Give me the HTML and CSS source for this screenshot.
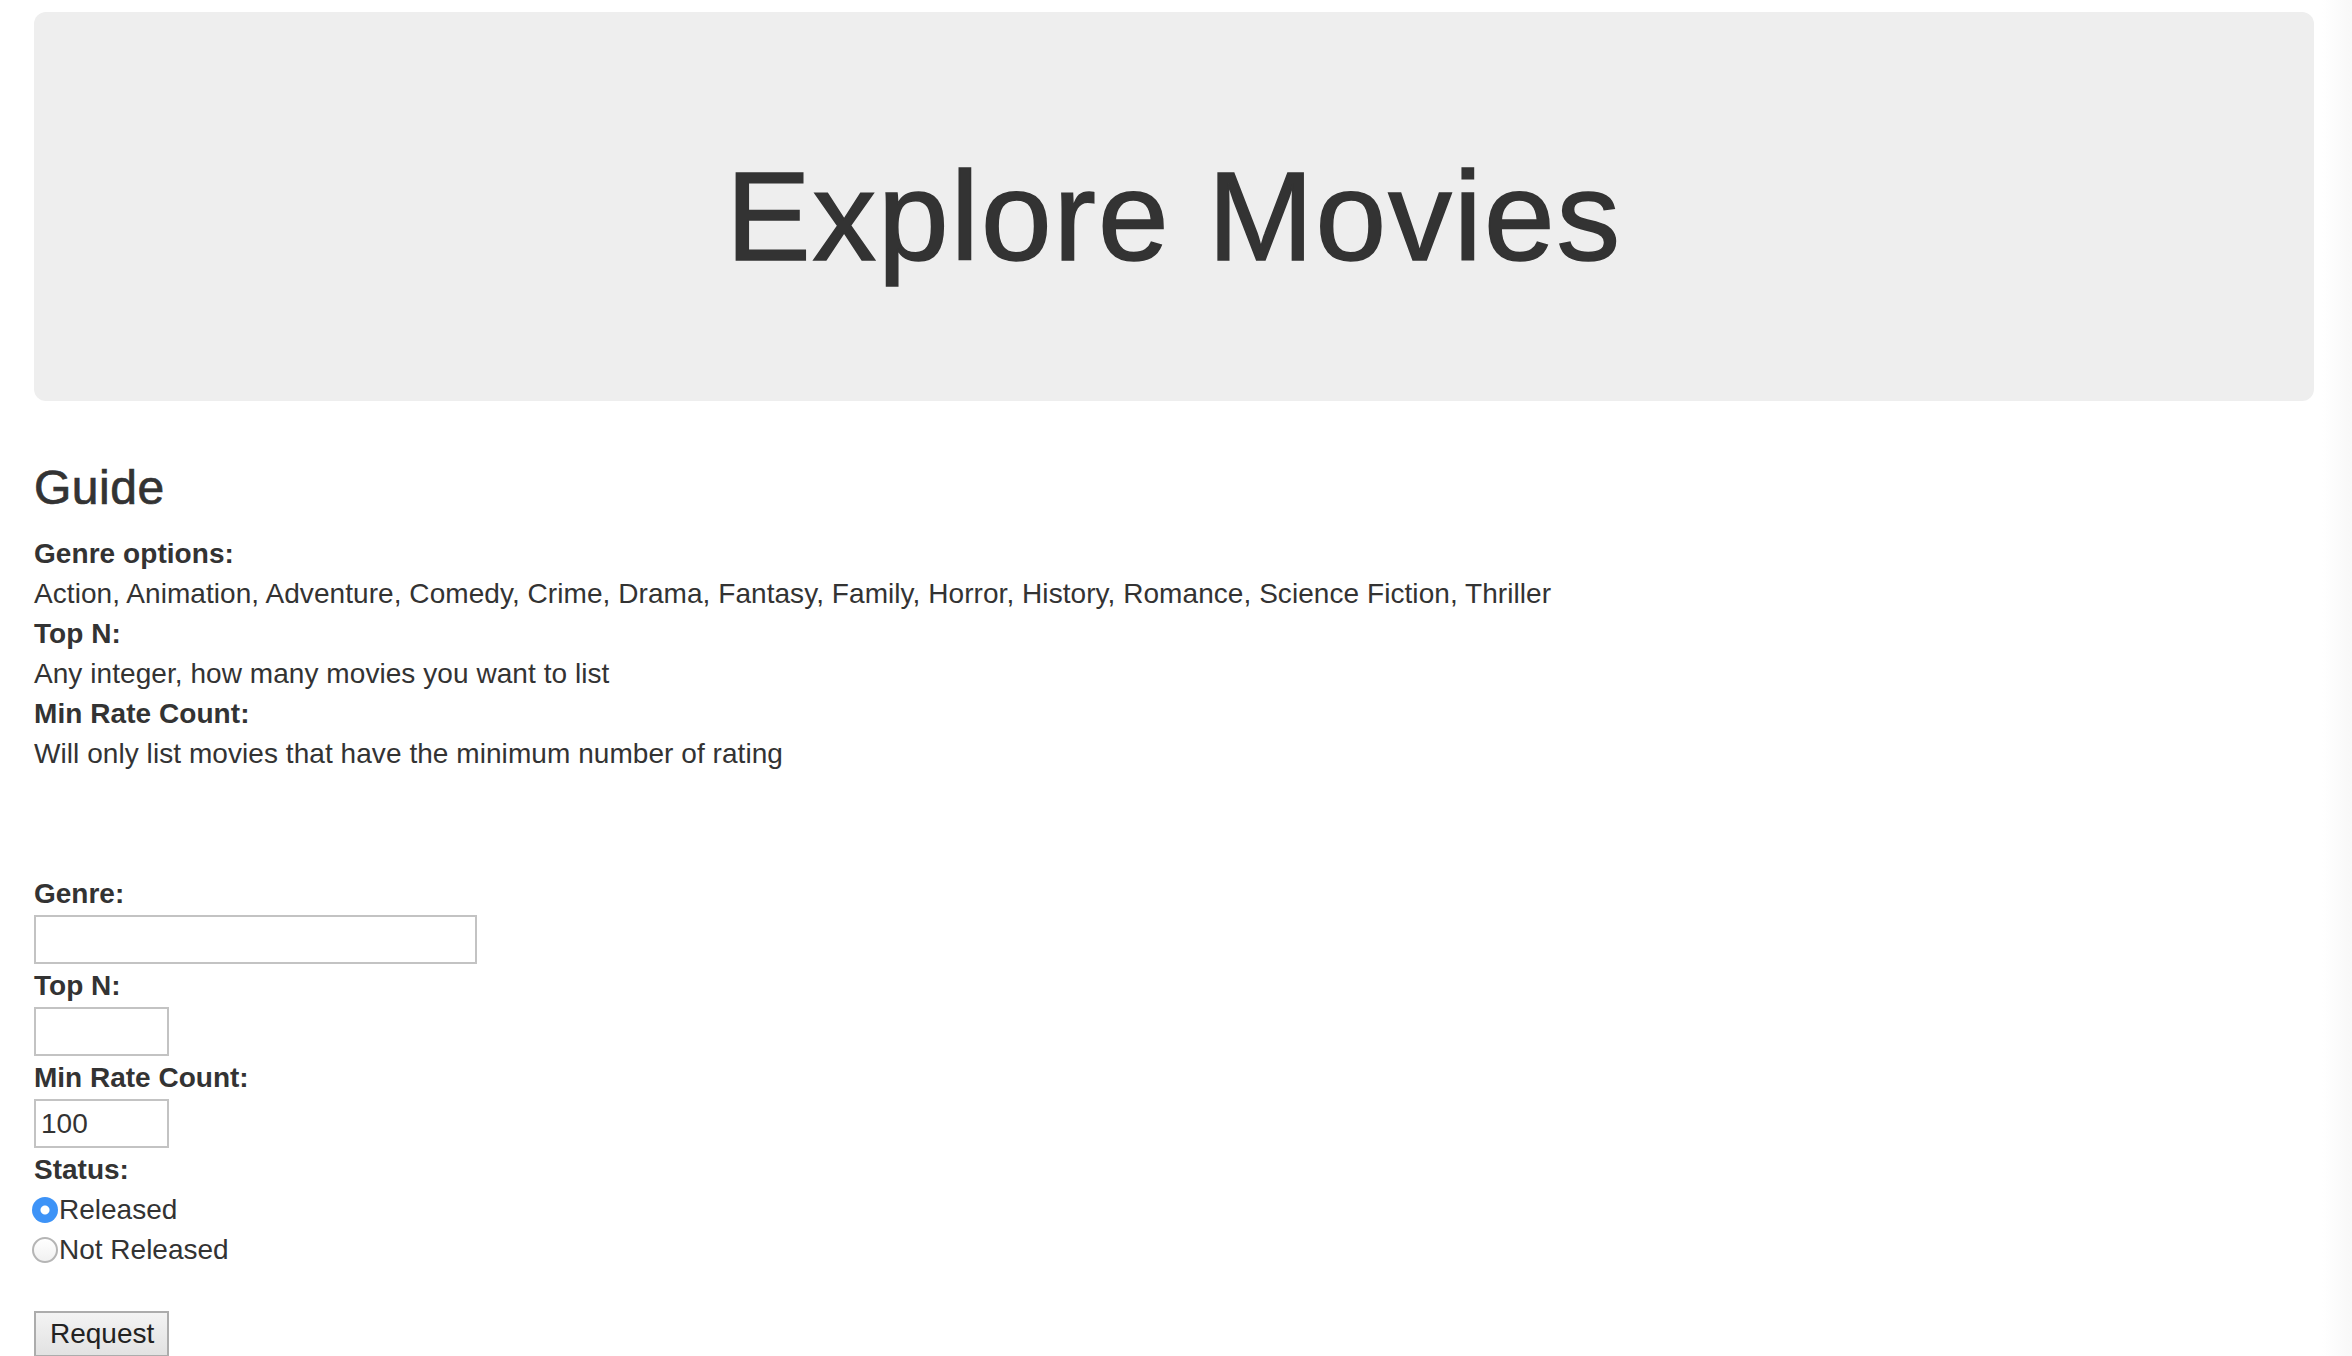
FILE: index.html
```html
<!DOCTYPE html>
<html lang="en">
<head>
<meta charset="utf-8">
<title>Explore Movies</title>
<link rel="stylesheet" href="styles.css">
</head>
<body>
<div class="page">
  <div class="jumbotron">
    <h1 class="title">Explore Movies</h1>
  </div>

  <h3 class="guide-title">Guide</h3>
  <div class="guide">
    <div class="term">Genre options:</div>
    <div class="desc">Action, Animation, Adventure, Comedy, Crime, Drama, Fantasy, Family, Horror, History, Romance, Science Fiction, Thriller</div>
    <div class="term">Top N:</div>
    <div class="desc">Any integer, how many movies you want to list</div>
    <div class="term">Min Rate Count:</div>
    <div class="desc">Will only list movies that have the minimum number of rating</div>
  </div>

  <form class="query" onsubmit="return false;">
    <label class="field-label" for="genre">Genre:</label>
    <input id="genre" class="field field-wide" type="text">
    <label class="field-label" for="topn">Top N:</label>
    <input id="topn" class="field field-short" type="text">
    <label class="field-label" for="minrate">Min Rate Count:</label>
    <input id="minrate" class="field field-short" type="text" value="100">
    <div class="field-label">Status:</div>
    <label class="radio-row"><input class="radio" type="radio" name="status" checked>Released</label>
    <label class="radio-row"><input class="radio" type="radio" name="status">Not Released</label>
    <button class="btn" type="button">Request</button>
  </form>
</div>
</body>
</html>
```

FILE: styles.css
```css
html, body {
  margin: 0;
  padding: 0;
}

body {
  font-family: "Liberation Sans", Arial, sans-serif;
  font-size: 28px;
  line-height: 40px;
  color: #333;
  background: linear-gradient(to right, #ffffff 0, #ffffff 2322px, #f8f8f8 2352px);
  min-height: 1356px;
  overflow: hidden;
}

.page {
  padding: 12px 38px 0 34px;
}

.jumbotron {
  background: #eeeeee;
  border-radius: 12px;
  padding: 96px 120px;
  margin-bottom: 60px;
}

.title {
  margin: 40px 0 20px;
  font-size: 127px;
  line-height: 137px;
  font-weight: 500;
  letter-spacing: 2px;
  -webkit-text-stroke: 1.6px #333;
  text-align: center;
  color: #333;
}

.guide-title {
  margin: 0 0 20px;
  font-size: 48px;
  line-height: 53px;
  font-weight: 500;
  letter-spacing: 0.5px;
  -webkit-text-stroke: 0.7px #333;
  color: #333;
}

.guide {
  letter-spacing: 0.06px;
}

.guide .term {
  font-weight: bold;
}

.query {
  margin-top: 100px;
}

.field-label {
  display: block;
  font-weight: bold;
  line-height: 40px;
}

.field {
  display: block;
  box-sizing: border-box;
  height: 49px;
  margin: 1px 0 2px;
  padding: 0 5px;
  border: 2px solid #c3c3c3;
  background: #fff;
  font-family: "Liberation Sans", Arial, sans-serif;
  font-size: 28px;
  color: #333;
  outline: none;
}

.field-wide {
  width: 443px;
}

.field-short {
  width: 135px;
}

.radio-row {
  display: flex;
  align-items: center;
  height: 40px;
  line-height: 40px;
}

.radio {
  appearance: none;
  -webkit-appearance: none;
  box-sizing: border-box;
  width: 26px;
  height: 26px;
  margin: 0 1px 0 -2px;
  border-radius: 50%;
  border: 2px solid #b5b5b5;
  background: linear-gradient(#ffffff, #f1f1f1);
  flex: none;
}

.radio:checked {
  border: none;
  background: radial-gradient(circle, #ffffff 0, #ffffff 4px, #3d93f7 5px, #3d93f7 100%);
}

.btn {
  display: block;
  box-sizing: border-box;
  margin-top: 41px;
  width: 135px;
  height: 46px;
  padding: 0 14px;
  border: 2px solid #acacac;
  background: linear-gradient(#f3f3f3, #e2e2e2);
  font-family: "Liberation Sans", Arial, sans-serif;
  font-size: 28px;
  color: #222;
  text-align: center;
}
```
